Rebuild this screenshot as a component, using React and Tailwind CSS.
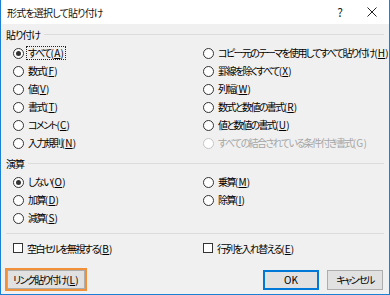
import React from 'react';

const font = "font-['Noto_Sans_CJK_JP',sans-serif] [font-feature-settings:'palt'] tracking-[-0.16em] whitespace-nowrap";

const Label = ({ text, k }) => (
  <span>
    {text}
    <span className="tracking-[0.02em]">
      (<span className="underline underline-offset-1">{k}</span>)
    </span>
  </span>
);

const Radio = ({ text, k, checked, disabled, focus }) => (
  <div className="flex items-center h-[18px] pl-[7px] gap-[2px]">
    <span
      className={`w-[11px] h-[11px] rounded-full border bg-white flex items-center justify-center shrink-0 ${
        disabled ? 'border-[#c4c4c4]' : 'border-[#333333]'
      }`}
    >
      {checked && <span className="w-[5px] h-[5px] rounded-full bg-[#333333]" />}
    </span>
    <span
      className={`leading-[12px] px-[1px] ${focus ? 'border border-dotted border-[#222]' : 'border border-transparent'} ${
        disabled ? 'text-[#a6a6a6]' : 'text-black'
      }`}
    >
      {disabled ? (
        <span>
          {text}
          <span className="tracking-[0.02em]">({k})</span>
        </span>
      ) : (
        <Label text={text} k={k} />
      )}
    </span>
  </div>
);

const Check = ({ text, k }) => (
  <div className="flex items-center h-[18px] pl-[7px] gap-[3px]">
    <span className="w-[10px] h-[10px] border border-[#333333] bg-white shrink-0" />
    <span className="px-[1px]">
      <Label text={text} k={k} />
    </span>
  </div>
);

const Section = ({ title }) => (
  <div className="flex items-center h-[20px] gap-[4px]">
    <span className="text-black tracking-[-0.1em]">{title}</span>
    <div className="flex-1 h-px bg-[#dcdcdc]" />
  </div>
);

export default function App() {
  return (
    <div className={`w-[390px] h-[295px] flex flex-col border-x border-b border-[#1c7fd6] bg-[#f0f0f0] text-[10px] ${font}`}>
      {/* title bar */}
      <div className="h-[24px] bg-white flex items-center pl-[6px] shrink-0">
        <span className="flex-1 text-[#111] tracking-[-0.08em]">形式を選択して貼り付け</span>
        <span className="w-[30px] text-center text-[12px] text-[#222] tracking-normal">?</span>
        <span className="w-[34px] flex justify-center">
          <svg width="10" height="10" viewBox="0 0 10 10" stroke="#222" strokeWidth="1">
            <path d="M0.5 0.5 L9.5 9.5 M9.5 0.5 L0.5 9.5" />
          </svg>
        </span>
      </div>

      <div className="flex-1 flex flex-col pl-[5px] pr-[5px]">
        <Section title="貼り付け" />
        <div className="grid grid-cols-[190px_1fr]">
          <div className="flex flex-col">
            <Radio text="すべて" k="A" checked focus />
            <Radio text="数式" k="F" />
            <Radio text="値" k="V" />
            <Radio text="書式" k="T" />
            <Radio text="コメント" k="C" />
            <Radio text="入力規則" k="N" />
          </div>
          <div className="flex flex-col">
            <Radio text="コピー元のテーマを使用してすべて貼り付け" k="H" />
            <Radio text="罫線を除くすべて" k="X" />
            <Radio text="列幅" k="W" />
            <Radio text="数式と数値の書式" k="R" />
            <Radio text="値と数値の書式" k="U" />
            <Radio text="すべての結合されている条件付き書式" k="G" disabled />
          </div>
        </div>

        <div className="mt-[1px]">
          <Section title="演算" />
        </div>
        <div className="grid grid-cols-[190px_1fr]">
          <div className="flex flex-col">
            <Radio text="しない" k="O" checked />
            <Radio text="加算" k="D" />
            <Radio text="減算" k="S" />
          </div>
          <div className="flex flex-col">
            <Radio text="乗算" k="M" />
            <Radio text="除算" k="I" />
          </div>
        </div>

        <div className="h-px bg-[#dcdcdc] mt-[6px]" />

        <div className="grid grid-cols-[190px_1fr] mt-[5px]">
          <Check text="空白セルを無視する" k="B" />
          <Check text="行列を入れ替える" k="E" />
        </div>

        <div className="flex items-center mt-[11px]">
          <div className="border-2 border-[#f0913a] -ml-[1px]">
            <button className="h-[19px] px-[5px] border border-[#adadad] bg-[#e1e1e1] text-black leading-none">
              <Label text="リンク貼り付け" k="L" />
            </button>
          </div>
          <div className="flex-1" />
          <button className="w-[56px] h-[20px] border-2 border-[#0078d7] bg-[#e1e1e1] text-black leading-none tracking-normal">
            OK
          </button>
          <button className="w-[56px] h-[20px] ml-[8px] mr-[1px] border border-[#adadad] bg-[#e1e1e1] text-black leading-none">
            キャンセル
          </button>
        </div>
      </div>
    </div>
  );
}
